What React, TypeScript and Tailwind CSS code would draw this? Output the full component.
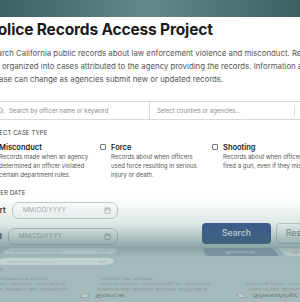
import { Calendar, ChevronDown, Search } from "lucide-react";

const caseTypes = [
  {
    title: "Misconduct",
    lines: ["Records made when an agency", "determined an officer violated", "certain department rules."],
  },
  {
    title: "Force",
    lines: ["Records about when officers", "used force resulting in serious", "injury or death."],
  },
  {
    title: "Shooting",
    lines: ["Records about when officers", "fired a gun, even if they missed."],
  },
];

function DateRow({ label }: { label: string }) {
  return (
    <div className="flex items-center gap-[6px]">
      <span className="text-[7.5px] font-semibold leading-none text-[#222]">{label}</span>
      <div className="flex h-[17px] flex-1 items-center rounded-[7px] border border-[#c9c9c9] bg-white pl-[10px] pr-[6px]">
        <span className="flex-1 text-[6.5px] text-[#aaa]">MM/DD/YYYY</span>
        <Calendar className="h-[7px] w-[7px] text-[#999]" strokeWidth={2} />
      </div>
    </div>
  );
}

/** the page as it sits above the "floor" line */
function Page({ bare }: { bare?: boolean }) {
  return (
    <div className={`h-[247px] w-[300px] overflow-hidden ${bare ? "" : "bg-white"}`}>
      <div
        className={`h-[17px] ${
          bare ? "" : "bg-[linear-gradient(to_right,#3a6264,#628887_50%,#3a6265)]"
        }`}
      />
      <div className="-ml-[12px] w-[360px] text-[#222]">
        <h1 className="whitespace-nowrap pt-[4px] text-[15.5px] font-bold leading-[18px] tracking-[-0.01em] text-[#1b1b1b]">
          Police Records Access Project
        </h1>

        <p className="mt-[7.5px] whitespace-nowrap text-[7.8px] leading-[13px] text-[#555]">
          Search California public records about law enforcement violence and misconduct. Records
          <br />
          are organized into cases attributed to the agency providing the records. Information about
          <br />a case can change as agencies submit new or updated records.
        </p>

        <div className="mt-[15.5px] flex h-[19px]">
          <div className="flex w-[162px] items-center gap-[5px] border border-[#dadada] pl-[8px]">
            <Search className="h-[7px] w-[7px] text-[#888]" strokeWidth={2} />
            <span className="text-[6px] text-[#8a8a8a]">Search by officer name or keyword</span>
          </div>
          <div className="flex w-[190px] items-center border border-l-0 border-[#dadada] pl-[7px]">
            <span className="flex-1 text-[6px] text-[#8a8a8a]">Select counties or agencies...</span>
            <span className="h-[12px] w-px bg-[#dcdcdc]" />
            <span className="flex w-[44px] justify-center">
              <ChevronDown className="h-[7px] w-[7px] text-[#999]" />
            </span>
          </div>
        </div>

        <div className="mt-[9px] text-[6px] uppercase leading-[8px] tracking-[0.02em] text-[#444]">
          Select case type
        </div>

        <div className="mt-[5.5px] flex">
          {caseTypes.map((c) => (
            <div key={c.title} className="flex w-[112px] gap-[5px]">
              <span className="mt-[1.5px] h-[6px] w-[6px] shrink-0 rounded-[1px] border border-[#777] bg-white" />
              <div className="whitespace-nowrap">
                <div className="text-[7.5px] font-semibold leading-[9px] text-[#222]">{c.title}</div>
                <div className="text-[6px] leading-[9px] text-[#555]">
                  {c.lines.map((l) => (
                    <div key={l}>{l}</div>
                  ))}
                </div>
              </div>
            </div>
          ))}
        </div>

        <div className="mt-[10.5px] text-[6px] uppercase leading-[8px] tracking-[0.02em] text-[#444]">
          Filter date
        </div>

        <div className="mt-[5px] flex items-end">
          <div className="flex w-[130px] flex-col gap-[9px]">
            <DateRow label="Start" />
            <DateRow label="End" />
          </div>
          <button
            type="button"
            className="mb-[1px] ml-[84px] h-[21px] w-[69px] rounded-[4px] bg-[#33508c] text-[8.5px] font-semibold text-[#e3e8f0]"
          >
            Search
          </button>
          <button
            type="button"
            className="mb-[1px] ml-[5px] h-[21px] rounded-[4px] border border-[#d2d2d2] bg-white px-[9px] text-[8.5px] text-[#888]"
          >
            Reset
          </button>
        </div>
      </div>
    </div>
  );
}

export default function App() {
  return (
    <div className="relative h-[302px] w-[300px] overflow-hidden bg-[#a6bbbb] font-['Inter','Liberation_Sans',sans-serif]">
      <Page />

      {/* fade toward the floor line */}
      <div className="pointer-events-none absolute left-0 top-[198px] h-[49px] w-[300px] bg-[linear-gradient(to_bottom,rgba(95,135,135,0),rgba(95,135,135,0.22)_55%,rgba(70,112,112,0.62))]" />

      {/* reflection on the floor */}
      <div className="pointer-events-none absolute left-0 top-[247px] h-[247px] w-[300px] origin-[149px_0] [transform:perspective(331px)_rotateX(69.5deg)]">
        <div className="opacity-[0.4] blur-[0.6px] [transform:scaleY(-1)]">
          <Page bare />
        </div>
      </div>
      <div className="pointer-events-none absolute left-0 top-[247px] h-[55px] w-[300px] bg-[linear-gradient(to_bottom,rgba(110,145,145,0.55),rgba(150,178,178,0.15)_20%,rgba(160,185,185,0.1))]" />
    </div>
  );
}
